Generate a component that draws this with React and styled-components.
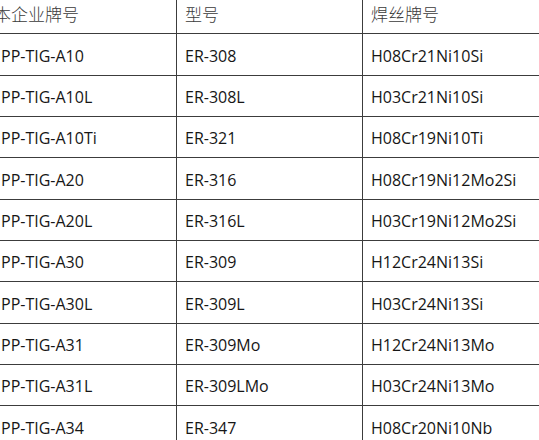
import React from "react";
import styled, { createGlobalStyle } from "styled-components";

const GlobalStyle = createGlobalStyle`
  html, body {
    margin: 0;
    padding: 0;
    background: #ffffff;
    overflow: hidden;
  }
`;

const Page = styled.div`
  width: 539px;
  height: 440px;
  overflow: hidden;
  background: #fff;
`;

const Sheet = styled.table`
  margin: -8px 0 0 -10px;
  border-collapse: collapse;
  table-layout: fixed;
  width: 572px;
  font-family: "Open Sans", "Noto Sans CJK SC", sans-serif;
`;

const Row = styled.tr`
  height: 41.35px;
`;

const HeadCell = styled.th`
  border: 1.5px solid #3c3c3c;
  padding: 0 0 0 ${(p) => (p.$shift ? 3 : 8)}px;
  text-align: left;
  vertical-align: middle;
  font-family: "Noto Sans CJK SC", sans-serif;
  font-weight: 300;
  font-size: 17px;
  color: #3a3a3a;
  white-space: nowrap;
  overflow: hidden;
`;

const Cell = styled.td`
  border: 1.5px solid #3c3c3c;
  padding: 2px 0 0 ${(p) => (p.$first ? 10 : 8)}px;
  vertical-align: middle;
  font-size: 16px;
  color: #161616;
  white-space: nowrap;
  overflow: hidden;
`;

const rows = [
  ["PP-TIG-A10", "ER-308", "H08Cr21Ni10Si"],
  ["PP-TIG-A10L", "ER-308L", "H03Cr21Ni10Si"],
  ["PP-TIG-A10Ti", "ER-321", "H08Cr19Ni10Ti"],
  ["PP-TIG-A20", "ER-316", "H08Cr19Ni12Mo2Si"],
  ["PP-TIG-A20L", "ER-316L", "H03Cr19Ni12Mo2Si"],
  ["PP-TIG-A30", "ER-309", "H12Cr24Ni13Si"],
  ["PP-TIG-A30L", "ER-309L", "H03Cr24Ni13Si"],
  ["PP-TIG-A31", "ER-309Mo", "H12Cr24Ni13Mo"],
  ["PP-TIG-A31L", "ER-309LMo", "H03Cr24Ni13Mo"],
  ["PP-TIG-A34", "ER-347", "H08Cr20Ni10Nb"],
];

export default function App() {
  return (
    <Page>
      <GlobalStyle />
      <Sheet>
        <colgroup>
          <col style={{ width: 186 }} />
          <col style={{ width: 186 }} />
          <col style={{ width: 200 }} />
        </colgroup>
        <thead>
          <Row>
            <HeadCell $shift>本企业牌号</HeadCell>
            <HeadCell>型号</HeadCell>
            <HeadCell>焊丝牌号</HeadCell>
          </Row>
        </thead>
        <tbody>
          {rows.map((r) => (
            <Row key={r[0]}>
              <Cell $first>{r[0]}</Cell>
              <Cell>{r[1]}</Cell>
              <Cell>{r[2]}</Cell>
            </Row>
          ))}
        </tbody>
      </Sheet>
    </Page>
  );
}
